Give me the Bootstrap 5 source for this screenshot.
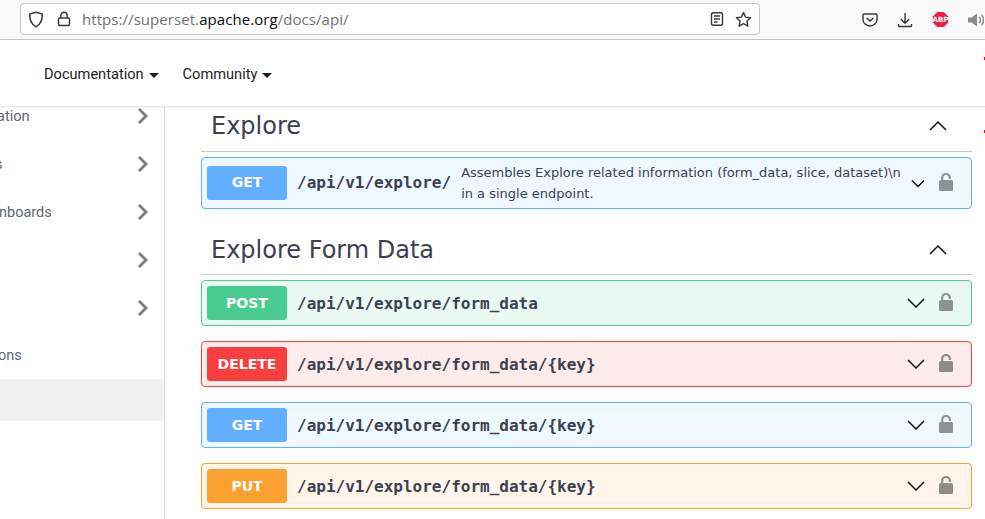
<!DOCTYPE html>
<html lang="en">
<head>
<meta charset="utf-8">
<title>Superset API</title>
<link href="https://cdn.jsdelivr.net/npm/bootstrap@5.3.0/dist/css/bootstrap.min.css" rel="stylesheet">
<style>
html,body{height:519px;overflow:hidden;background:#fff}
body{width:985px;font-family:"Roboto",sans-serif}
.chrome-bar{height:40px;background:#f9f9fa;border-bottom:1px solid #c4c4c6}
.url-box{margin-left:20px;width:740px;height:32px;margin-top:3px;background:#fff;border:1px solid #c8c8cb;border-radius:4px;padding-left:7px;padding-right:7px}
.url-text{font-family:"Open Sans","Noto Sans",sans-serif;font-size:15px;color:#6f6f73;margin-left:10px;letter-spacing:.06px}
.url-text b{font-weight:400;color:#0c0c0d}
.lock-ic{margin-left:12px}
.read-ic{margin-left:auto}
.star-ic{margin-left:11px}
.tool-ic{color:#38383d;display:block;flex:none}
.tools-right{margin-left:auto;width:225px;padding-left:102px}
.dl-ic{margin-left:19px}
.abp-ic{margin-left:19px}
.sound-ic{margin-left:19px;color:#8b8b8e}
.top-nav{height:67px;background:#fff;border-bottom:1px solid #e9e9e9;box-shadow:0 1px 2px rgba(0,0,0,.06);padding-left:44px;padding-top:3px;gap:24px;position:relative}
.top-link{font-size:14.6px;color:#1c1e21;text-decoration:none}
.top-link::after{content:"";display:inline-block;margin-left:5px;vertical-align:1px;border-top:5px solid #1c1e21;border-left:5px solid transparent;border-right:5px solid transparent}
.tick{position:absolute;left:984px;width:1px;height:3px;background:#f00}
.tick-a{top:17px}
.tick-b{top:90px}
.page-area{height:412px}
.side-col{width:165px;flex:none;border-right:1px solid #dadde1;overflow:hidden}
.side-list{margin-top:-15px}
.side-item{height:48px;position:relative;color:#606770;font-size:14.5px;white-space:nowrap}
.side-lab{position:absolute;top:50%;transform:translateY(-50%);margin-top:1px}
.lab-a{left:-3px}
.lab-b{left:-5px}
.lab-c{left:-1px}
.lab-d{left:-2px;margin-top:0}
.side-item svg{position:absolute;right:15px;top:50%;transform:translateY(-50%)}
.side-active{height:42px;background:#f1f1f1;border-radius:0 2px 2px 0;margin-top:-1px}
.main-col{flex:1;min-width:0;padding:0 13px 0 36px;font-family:"DejaVu Sans",sans-serif;color:#3b4151}
.group-head{border-bottom:1px solid #c8c8c8;padding-left:10px;padding-right:24px;margin-bottom:5px}
.head-a{height:45px;padding-bottom:6px}
.head-b{height:46px;padding-bottom:4px}
.head-b .group-title{padding-top:2px}
.group-title{font-size:24px;margin:0;line-height:1.2}
.op-row{border:1px solid;border-radius:4px;padding:0 5px;margin-bottom:15px;height:46px}
.op-tall{height:52px;margin-bottom:20px}
.op-get{background:#eff7ff;border-color:#61affe}
.op-post{background:#ebf9f3;border-color:#49cc90}
.op-del{background:#feebeb;border-color:#f93e3e}
.op-put{background:#fff5ea;border-color:#fca130}
.verb{width:80px;height:34px;border-radius:3px;color:#fff;font-weight:700;font-size:14px;flex:none;margin-right:10px}
.op-tall .verb{padding-bottom:2px}
.verb-get{background:#61affe}.verb-post{background:#49cc90}.verb-del{background:#f93e3e}.verb-put{background:#fca130}
.op-path{font-family:"DejaVu Sans Mono",monospace;font-weight:700;font-size:16px;white-space:nowrap;margin-top:2px}
.op-tall .op-path{margin-top:0}
.op-desc{font-size:13px;line-height:21px;margin-left:10px;width:442px;flex:none;margin-top:-1px}
.end-ic{margin-left:auto;gap:14px;padding-right:13px}
.pad-ic{margin-top:-3px}
.op-tall .chev-ic{margin-top:1px}
</style>
</head>
<body>
<div class="chrome-bar d-flex">
  <div class="url-box d-flex align-items-center">
    <svg class="tool-ic" width="16" height="17" viewBox="0 0 16 17" fill="none" stroke="currentColor" stroke-width="1.5"><path d="M8 1.200 14.300 3c.2 5.800-1.500 10.300-6.300 12.800C3.200 13.300 1.500 8.800 1.700 3z"/></svg>
    <svg class="tool-ic lock-ic" width="16" height="16" viewBox="0 0 16 16" fill="none" stroke="currentColor" stroke-width="1.5"><rect x="2.500" y="7" width="11" height="7.500" rx="1.500"/><path d="M4.800 7V4.500a3.200 3.200 0 0 1 6.400 0V7"/></svg>
    <span class="url-text">https://superset.<b>apache.org</b>/docs/api/</span>
    <svg class="tool-ic read-ic" width="14" height="16" viewBox="0 0 14 16" fill="none" stroke="currentColor" stroke-width="1.400"><rect x="1.500" y="1.700" width="11" height="12.600" rx="1.800"/><path d="M4 5h6M4 8h6M4 11h3.500"/></svg>
    <svg class="tool-ic star-ic" width="17" height="17" viewBox="0 0 17 17" fill="none" stroke="currentColor" stroke-width="1.400" stroke-linejoin="round"><path d="m8.500 1.500 2.100 4.600 5 .6-3.700 3.400 1 5-4.400-2.500-4.400 2.500 1-5L1.400 6.700l5-.6z"/></svg>
  </div>
  <div class="tools-right d-flex align-items-center">
    <svg class="tool-ic" width="16" height="14" viewBox="0 0 16 14" fill="none" stroke="currentColor" stroke-width="1.400"><path d="M2.200 1h11.600c.7 0 1.200.5 1.200 1.200V6.500a7 6.500 0 0 1-14 0V2.200C1 1.500 1.500 1 2.200 1z"/><path d="m5 5.200 3 2.800 3-2.800" stroke-linecap="round"/></svg>
    <svg class="tool-ic dl-ic" width="16" height="16" viewBox="0 0 16 16" fill="none" stroke="currentColor" stroke-width="1.400"><path d="M8 1v10M3.800 7 8 11.200 12.200 7M1.500 12v1.700c0 .4.300.8.800.8h11.400c.5 0 .8-.4.800-.8V12"/></svg>
    <svg class="tool-ic abp-ic" width="17" height="17" viewBox="0 0 18 18"><path fill="#ee2045" d="M5.500 1h7L17 5.500v7L12.500 17h-7L1 12.500v-7z"/><text x="9" y="12" text-anchor="middle" fill="#fff" font-family="DejaVu Sans" font-weight="700" font-size="7.500">ABP</text></svg>
    <svg class="tool-ic sound-ic" width="16" height="16" viewBox="0 0 16 16"><path fill="currentColor" d="M0 5.500h3.500L9 1.500v13l-5.500-4H0z"/><path d="M11 5a4 4 0 0 1 0 6M13.500 3a7 7 0 0 1 0 10" fill="none" stroke="currentColor" stroke-width="1.600"/></svg>
  </div>
</div>
<nav class="top-nav d-flex align-items-center">
  <a class="top-link" href="#">Documentation</a>
  <a class="top-link" href="#">Community</a>
  <span class="tick tick-a"></span>
  <span class="tick tick-b"></span>
</nav>
<div class="page-area d-flex">
  <aside class="side-col">
    <div class="side-list">
    <div class="side-item">
      <span class="side-lab lab-a">ation</span>
      <svg width="12" height="18" viewBox="0 0 12 18" fill="none" stroke="#7d7d7d" stroke-width="2.800"><path d="m2 2 7 7-7 7"/></svg>
    </div>
    <div class="side-item">
      <span class="side-lab lab-b">s</span>
      <svg width="12" height="18" viewBox="0 0 12 18" fill="none" stroke="#7d7d7d" stroke-width="2.800"><path d="m2 2 7 7-7 7"/></svg>
    </div>
    <div class="side-item">
      <span class="side-lab lab-c">nboards</span>
      <svg width="12" height="18" viewBox="0 0 12 18" fill="none" stroke="#7d7d7d" stroke-width="2.800"><path d="m2 2 7 7-7 7"/></svg>
    </div>
    <div class="side-item"><svg width="12" height="18" viewBox="0 0 12 18" fill="none" stroke="#7d7d7d" stroke-width="2.800"><path d="m2 2 7 7-7 7"/></svg></div>
    <div class="side-item"><svg width="12" height="18" viewBox="0 0 12 18" fill="none" stroke="#7d7d7d" stroke-width="2.800"><path d="m2 2 7 7-7 7"/></svg></div>
    <div class="side-item">
      <span class="side-lab lab-d">ons</span>
    </div>
    <div class="side-active"></div>
    </div>
  </aside>
  <main class="main-col">
    <div class="group-head head-a d-flex align-items-center justify-content-between">
      <h3 class="group-title fw-normal">Explore</h3>
      <svg width="20" height="12" viewBox="0 0 20 12" fill="none" stroke="#111" stroke-width="1.500"><path d="m2 10 8-8 8 8"/></svg>
    </div>
    <div class="op-row op-tall op-get d-flex align-items-center">
      <span class="verb verb-get d-flex align-items-center justify-content-center">GET</span>
      <span class="op-path">/api/v1/explore/</span>
      <span class="op-desc">Assembles Explore related information (form_data, slice, dataset)\n in a single endpoint.</span>
      <div class="end-ic d-flex align-items-center">
        <svg class="chev-ic" width="14" height="9" viewBox="0 0 14 9" fill="none" stroke="#111" stroke-width="1.500"><path d="m1 1.500 6 6 6-6"/></svg>
        <svg class="pad-ic" width="14" height="18" viewBox="0 0 14 18"><path fill="none" stroke="#8d9391" stroke-width="2.200" d="M3.200 8V4.800a3.800 3.800 0 0 1 7.600 0V6"/><rect y="7" width="14" height="11" rx="1.500" fill="#8d9391"/></svg>
      </div>
    </div>
    <div class="group-head head-b d-flex align-items-center justify-content-between">
      <h3 class="group-title fw-normal">Explore Form Data</h3>
      <svg width="20" height="12" viewBox="0 0 20 12" fill="none" stroke="#111" stroke-width="1.500"><path d="m2 10 8-8 8 8"/></svg>
    </div>
    <div class="op-row op-post d-flex align-items-center">
      <span class="verb verb-post d-flex align-items-center justify-content-center">POST</span>
      <span class="op-path">/api/v1/explore/form_data</span>
      <div class="end-ic d-flex align-items-center">
        <svg class="chev-ic" width="18" height="10" viewBox="0 0 18 10" fill="none" stroke="#111" stroke-width="1.500"><path d="m1 1 8 8 8-8"/></svg>
        <svg class="pad-ic" width="14" height="18" viewBox="0 0 14 18"><path fill="none" stroke="#8d9391" stroke-width="2.200" d="M3.200 8V4.800a3.800 3.800 0 0 1 7.600 0V6"/><rect y="7" width="14" height="11" rx="1.500" fill="#8d9391"/></svg>
      </div>
    </div>
    <div class="op-row op-del d-flex align-items-center">
      <span class="verb verb-del d-flex align-items-center justify-content-center">DELETE</span>
      <span class="op-path">/api/v1/explore/form_data/{key}</span>
      <div class="end-ic d-flex align-items-center">
        <svg class="chev-ic" width="18" height="10" viewBox="0 0 18 10" fill="none" stroke="#111" stroke-width="1.500"><path d="m1 1 8 8 8-8"/></svg>
        <svg class="pad-ic" width="14" height="18" viewBox="0 0 14 18"><path fill="none" stroke="#8e8b88" stroke-width="2.200" d="M3.200 8V4.800a3.800 3.800 0 0 1 7.600 0V6"/><rect y="7" width="14" height="11" rx="1.500" fill="#8e8b88"/></svg>
      </div>
    </div>
    <div class="op-row op-get d-flex align-items-center">
      <span class="verb verb-get d-flex align-items-center justify-content-center">GET</span>
      <span class="op-path">/api/v1/explore/form_data/{key}</span>
      <div class="end-ic d-flex align-items-center">
        <svg class="chev-ic" width="18" height="10" viewBox="0 0 18 10" fill="none" stroke="#111" stroke-width="1.500"><path d="m1 1 8 8 8-8"/></svg>
        <svg class="pad-ic" width="14" height="18" viewBox="0 0 14 18"><path fill="none" stroke="#8d9391" stroke-width="2.200" d="M3.200 8V4.800a3.800 3.800 0 0 1 7.600 0V6"/><rect y="7" width="14" height="11" rx="1.500" fill="#8d9391"/></svg>
      </div>
    </div>
    <div class="op-row op-put d-flex align-items-center">
      <span class="verb verb-put d-flex align-items-center justify-content-center">PUT</span>
      <span class="op-path">/api/v1/explore/form_data/{key}</span>
      <div class="end-ic d-flex align-items-center">
        <svg class="chev-ic" width="18" height="10" viewBox="0 0 18 10" fill="none" stroke="#111" stroke-width="1.500"><path d="m1 1 8 8 8-8"/></svg>
        <svg class="pad-ic" width="14" height="18" viewBox="0 0 14 18"><path fill="none" stroke="#8e8b88" stroke-width="2.200" d="M3.200 8V4.800a3.800 3.800 0 0 1 7.600 0V6"/><rect y="7" width="14" height="11" rx="1.500" fill="#8e8b88"/></svg>
      </div>
    </div>
  </main>
</div>
<script src="https://cdn.jsdelivr.net/npm/bootstrap@5.3.0/dist/js/bootstrap.bundle.min.js"></script>
</body>
</html>
